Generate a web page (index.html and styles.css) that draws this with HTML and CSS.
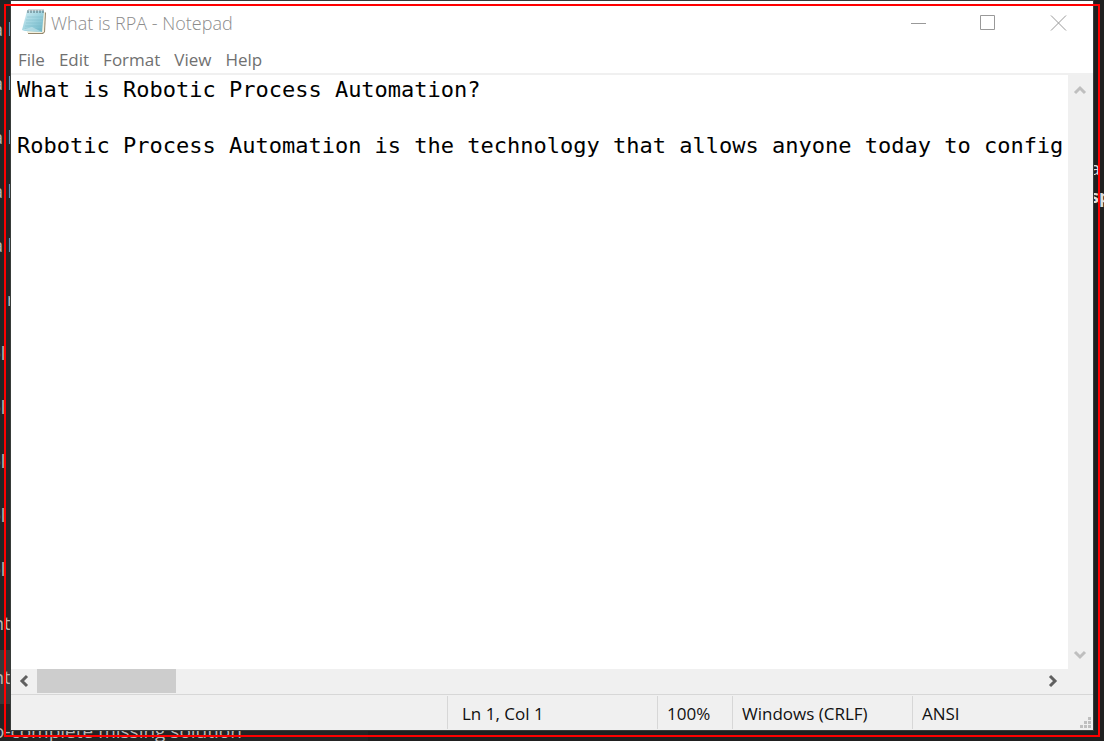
FILE: index.html
```html
<!DOCTYPE html>
<html lang="en">
<head>
<meta charset="utf-8">
<title>What is RPA - Notepad</title>
<link rel="stylesheet" href="styles.css">
</head>
<body>
<div class="desktop">
  <div class="backdrop">
    <ul class="list">
      <li>a l</li><li>a l</li><li>a l</li><li>a l</li><li>a l</li>
      <li class="indent">r</li>
      <li class="low">ol</li><li class="low">ol</li><li class="low">ol</li><li class="low">ol</li><li class="low">ol</li>
      <li class="wide">nt</li>
      <li class="wide selected">nt</li>
      <li class="caption">o-complete missing solution</li>
    </ul>
    <p class="note">a<br><b>sp</b></p>
  </div>
  <main class="window">
    <header class="titlebar">
      <svg class="app-icon" width="26" height="28" viewBox="0 0 26 28" aria-hidden="true">
        <defs><linearGradient id="page" x1="0" y1="0" x2="1" y2="1"><stop offset="0" stop-color="#d3edf3"/><stop offset=".5" stop-color="#9ed3df"/><stop offset="1" stop-color="#68b3c5"/></linearGradient></defs>
        <path d="M7 3h16l1 1-1 19-2 2H6z" fill="#94866b"/>
        <path d="M6 3h17l-1 20-2 1H5z" fill="#f5f1df"/>
        <path d="M5 2h17l-2 21-17-1-3-1z" fill="url(#page)"/>
        <path d="M5 8h16M4 11h17M4 14h16M3 17h17M3 20h17" stroke="#72b4c5" stroke-opacity=".4"/>
        <path d="M0 21l10-3 10 5z" fill="#e3f5f8" opacity=".45"/>
        <path d="M6 1v3m3-3v3m3-3v3m3-3v3m3-3v3m3-3v3" stroke="#536f79" stroke-width="1"/>
        <path d="M6 1h16" stroke="#a9b5b8"/>
      </svg>
      <h1 class="title">What is RPA - Notepad</h1>
      <div class="controls">
        <button type="button" aria-label="Minimize"><svg width="16" height="16" viewBox="0 0 16 16"><path d="M1 8.500h15"/></svg></button>
        <button type="button" aria-label="Maximize"><svg width="16" height="16" viewBox="0 0 16 16"><path d="M.5.5h14v14H.5z"/></svg></button>
        <button type="button" aria-label="Close"><svg width="16" height="16" viewBox="0 0 16 16"><path d="M1 .5l15 15M16 .5l-15 15"/></svg></button>
      </div>
    </header>
    <nav class="menu">
      <button type="button">File</button><button type="button">Edit</button><button type="button">Format</button><button type="button">View</button><button type="button">Help</button>
    </nav>
    <div class="editor">
      <textarea class="text" wrap="off" spellcheck="false" aria-label="Document text">What is Robotic Process Automation?

Robotic Process Automation is the technology that allows anyone today to configur</textarea>
      <div class="vscroll">
        <button type="button" aria-label="Scroll up"><svg width="12" height="10" viewBox="0 0 12 10"><path d="M0 9l5-5 5 5"/></svg></button>
        <button type="button" aria-label="Scroll down"><svg width="12" height="10" viewBox="0 0 12 10"><path d="M0 2l5 5 5-5"/></svg></button>
      </div>
    </div>
    <div class="hscroll">
      <button type="button" aria-label="Scroll left"><svg width="10" height="12" viewBox="0 0 10 12"><path d="M8 0L3 5l5 5"/></svg></button>
      <div class="track"><div class="thumb"></div></div>
      <button type="button" aria-label="Scroll right"><svg width="10" height="12" viewBox="0 0 10 12"><path d="M1 0l5 5-5 5"/></svg></button>
    </div>
    <footer class="status">
      <span class="position">Ln 1, Col 1</span>
      <span class="zoom">100%</span>
      <span class="ending">Windows (CRLF)</span>
      <span class="encoding">ANSI</span>
      <svg class="grip" width="12" height="12" viewBox="0 0 12 12" aria-hidden="true"><path d="M8 0h3v3H8zM4 4h3v3H4zM8 4h3v3H8zM0 8h3v3H0zM4 8h3v3H4zM8 8h3v3H8z"/></svg>
    </footer>
  </main>
  <div class="outline"></div>
</div>
</body>
</html>
```
FILE: styles.css
```css
* { box-sizing: border-box; }
body { margin: 0; font-family: "Open Sans", "Noto Sans", sans-serif; font-size: 17px; }
button { border: 0; padding: 0; background: none; font: inherit; color: inherit; }
svg { display: block; overflow: visible; }
.desktop { position: relative; display: flex; height: 100vh; padding: 1px 11px 11px; background: #1f1f1f; overflow: hidden; }
.backdrop { position: absolute; inset: 0; display: flex; justify-content: space-between; overflow: hidden; color: #b8b8b8; font-size: 18px; }
.list { width: 368px; flex: none; margin: 0; padding: 2px 0 0; list-style: none; background: #242424; }
.list li { height: 54px; line-height: 54px; margin-left: -7px; white-space: nowrap; }
.list .indent { padding-left: 14px; }
.list .low { margin-left: -10px; }
.list .wide { margin-left: 0; text-indent: -7px; }
.list .selected { background: #383838; }
.list .caption { font-size: 19px; }
.note { width: 14px; margin: 0; padding-top: 154px; line-height: 28px; color: #ddd; }
.window { position: relative; flex: 1; min-width: 0; display: flex; flex-direction: column; background: #fff; box-shadow: 0 0 0 1px #373b39; }
.titlebar { display: flex; align-items: center; height: 44px; padding-left: 11px; color: #8c8c8c; }
.app-icon { flex: none; }
.title { flex: 1; margin: 0 0 0 3px; font-size: 18px; font-weight: 300; white-space: nowrap; }
.controls { display: flex; align-self: stretch; }
.controls button { display: flex; align-items: center; justify-content: center; width: 70px; }
.controls svg { fill: none; stroke: #999; }
.menu { display: flex; gap: 14px; height: 30px; padding: 2px 7px 0; border-bottom: 2px solid #f0f0f0; line-height: 26px; color: #707070; }
.editor { flex: 1; min-height: 0; display: flex; }
.text { flex: 1; min-width: 0; margin: 1px 6px 0; padding: 0; border: 0; outline: 0; resize: none; overflow: hidden; background: none; color: #000; font-family: "DejaVu Sans Mono", monospace; font-size: 22px; line-height: 28px; }
.vscroll { width: 25px; display: flex; flex-direction: column; justify-content: space-between; background: #f0f0f0; }
.vscroll button, .hscroll button { display: flex; align-items: center; justify-content: center; }
.vscroll button { height: 28px; }
.vscroll svg, .hscroll svg { fill: none; stroke: #bfbfbf; stroke-width: 3px; }
.hscroll { display: flex; height: 25px; padding-right: 26px; background: #f0f0f0; }
.hscroll button { width: 26px; }
.hscroll svg { stroke: #606060; }
.track { flex: 1; }
.thumb { width: 139px; height: 24px; background: #cdcdcd; }
.status { position: relative; display: flex; justify-content: flex-end; height: 36px; padding-top: 1px; border-top: 1px solid #d7d7d7; background: #f0f0f0; line-height: 36px; color: #111; white-space: nowrap; }
.status span { height: 33px; padding-left: 9px; border-left: 1px solid #d7d7d7; }
.status .position { width: 210px; padding-left: 14px; }
.status .zoom { width: 75px; }
.status .ending { width: 180px; }
.status .encoding { width: 181px; }
.grip { position: absolute; right: 1px; bottom: 1px; fill: #bfbfbf; }
.outline { position: absolute; inset: 4px; border: 2px solid #f00; pointer-events: none; }
```
